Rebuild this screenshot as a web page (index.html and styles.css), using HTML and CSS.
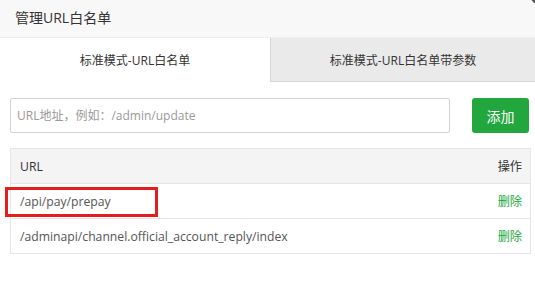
FILE: index.html
```html
<!DOCTYPE html>
<html lang="zh-CN">
<head>
    <meta charset="UTF-8">
    <title>管理URL白名单</title>
    <link rel="stylesheet" href="styles.css">
</head>
<body>
    <div class="dialog">
        <header class="dialog-title">管理URL白名单</header>
        <span class="dialog-close"></span>
        <div class="tabs">
            <div class="tab active">标准模式-URL白名单</div>
            <div class="tab">标准模式-URL白名单带参数</div>
        </div>
        <div class="tab-body">
            <form class="add-form">
                <input type="text" class="url-input" placeholder="URL地址，例如：/admin/update">
                <button type="button" class="btn-add">添加</button>
            </form>
            <div class="table">
                <div class="row head">
                    <div class="cell url">URL</div>
                    <div class="cell op">操作</div>
                </div>
                <div class="row">
                    <div class="cell url">/api/pay/prepay</div>
                    <div class="cell op"><a href="#">删除</a></div>
                    <span class="mark"></span>
                </div>
                <div class="row">
                    <div class="cell url">/adminapi/channel.official_account_reply/index</div>
                    <div class="cell op"><a href="#">删除</a></div>
                </div>
            </div>
        </div>
    </div>
</body>
</html>
```
FILE: styles.css
```css
:root {
    --text-color: #333333;
    --muted-color: #999999;
    --line-color: #e6e6e6;
    --green: #22a73e;
}
body {
    margin: 0;
    font-family: 'Open Sans', 'Noto Sans CJK SC', sans-serif;
    font-size: 12px;
    color: var(--text-color);
    background: #ffffff;
}
.dialog {
    position: relative;
    width: 535px;
    height: 286px;
    overflow: hidden;
}
.dialog-title {
    height: 37px;
    line-height: 35px;
    padding-left: 15px;
    font-size: 14px;
    background: #f8f8f8;
    border-bottom: 1px solid #eeeeee;
}
/* close button, only its corner shows */
.dialog-close {
    position: absolute;
    top: -24px;
    right: -24px;
    width: 28px;
    height: 28px;
    border-radius: 50%;
    background: #555555;
    border: 2px solid #ffffff;
}
.tabs {
    display: flex;
    height: 44px;
}
.tab {
    flex: 1;
    display: flex;
    align-items: center;
    justify-content: center;
    background: #eaeaea;
    border-left: 1px solid #d6d6d6;
    border-bottom: 1px solid #d6d6d6;
}
.tab.active {
    flex: 0 0 270px;
    background: #ffffff;
    border: none;
}
.tab-body {
    padding: 16px 6px 0 10px;
}
.add-form {
    display: flex;
    align-items: center;
    gap: 22px;
    margin: 0;
}
.url-input {
    box-sizing: border-box;
    width: 440px;
    height: 35px;
    padding: 0 6px;
    font: inherit;
    color: var(--text-color);
    border: 1px solid #d2d2d2;
    border-radius: 2px;
    outline: none;
}
.url-input::placeholder {
    color: var(--muted-color);
}
.btn-add {
    width: 57px;
    height: 35px;
    border: none;
    border-radius: 3px;
    background: var(--green);
    color: #ffffff;
    font: inherit;
    font-size: 14px;
    cursor: pointer;
}
.table {
    width: 519px;
    margin-top: 15px;
    border: 1px solid var(--line-color);
    border-bottom: none;
}
.row {
    position: relative;
    display: flex;
    justify-content: space-between;
    align-items: center;
    height: 34px;
    padding: 0 8px 0 9px;
    font-size: 12.2px;
    border-bottom: 1px solid var(--line-color);
    color: #555555;
}
.row.head {
    background: #f4f4f4;
    color: var(--text-color);
}
.cell.op a {
    color: var(--green);
    text-decoration: none;
}
/* red annotation box */
.mark {
    position: absolute;
    left: -6px;
    top: 3px;
    width: 147px;
    height: 24px;
    border: 3px solid #e41e1e;
}
```
